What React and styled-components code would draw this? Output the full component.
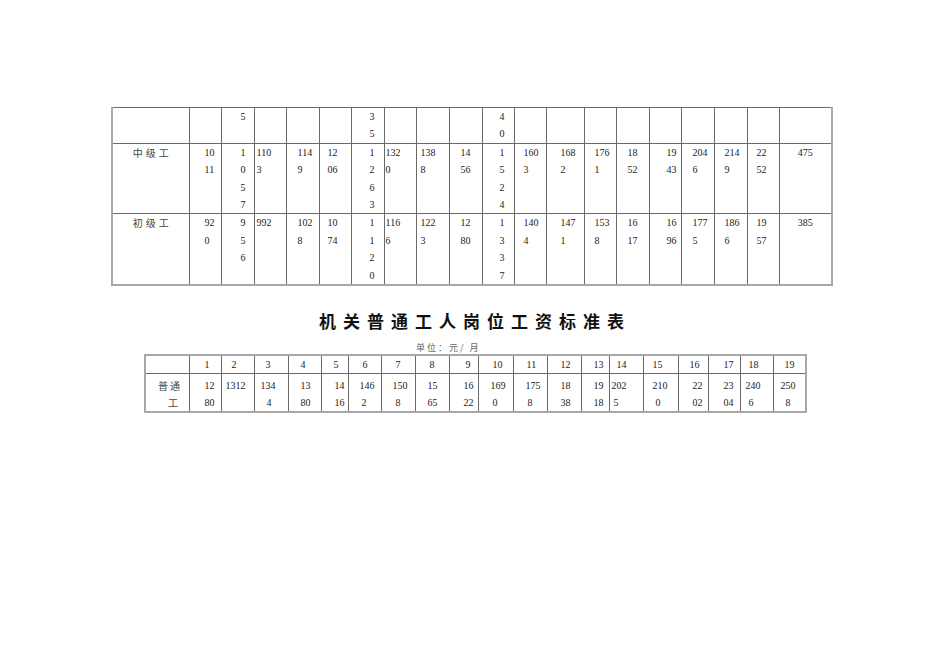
import React from 'react'
import styled, { createGlobalStyle } from 'styled-components'

const GlobalStyle = createGlobalStyle`
    html, body {
        margin: 0;
        padding: 0;
        background-color: #ffffff;
    }
    body {
        font-family: "Liberation Serif", "Noto Sans CJK SC", serif;
        color: #222222;
    }
`

const Page = styled.div`
    width: 950px;
    min-height: 672px;
    padding-top: 107px;
    box-sizing: border-box;
`

const Grid = styled.table`
    border-collapse: collapse;
    table-layout: fixed;
    width: ${props => props.$width}px;
    margin-left: ${props => props.$left}px;
    font-size: 10px;
    line-height: ${props => props.$lineHeight}px;
    border: 2px solid #a8a8a8;
    ${props => props.$openTop ? 'border-top: 1px solid #6a6a6a;' : ''}
`

const Cell = styled.td`
    border: 1px solid #6a6a6a;
    padding: ${props => props.$top || 0}px 0 0 ${props => props.$pad || 0}px;
    vertical-align: top;
    text-align: ${props => props.$center ? 'center' : 'left'};
    white-space: nowrap;
    overflow: hidden;
`

const Line = styled.div`
    padding-left: ${props => props.$dx || 0}px;
`

const Label = styled.div`
    font-family: "Noto Sans CJK SC", sans-serif;
    font-size: 10px;
    letter-spacing: ${props => props.$spacing}px;
    color: #444444;
`

const Title = styled.h1`
    margin: 25px 0 0 0;
    font-family: "Noto Sans CJK SC", sans-serif;
    font-size: 17px;
    font-weight: 700;
    line-height: 20px;
    letter-spacing: 7px;
    text-align: center;
    color: #111111;
`

const Unit = styled.p`
    margin: 11px 0 0 0;
    padding-left: 416px;
    font-family: "Noto Sans CJK SC", sans-serif;
    font-size: 9px;
    line-height: 12px;
    color: #666666;
    letter-spacing: 2px;
`

// upper table: continuation of the wage grid (columns 1..19 plus allowance)
const topWidths = [77, 32, 33, 32, 33, 32, 33, 32, 33, 33, 32, 32, 38, 32, 33, 32, 33, 33, 32, 53]
const topPads = [0, 15, 19, 2, 11, 8, 18, 1, 4, 11, 17, 9, 14, 10, 11, 17, 11, 10, 9, 0]

const topRows = [
    {
        label: '',
        cells: [[], ['5'], [], [], [], ['3', '5'], [], [], [], ['4', '0'],
            [], [], [], [], [], [], [], [], []],
    },
    {
        label: '中级工',
        cells: [['10', '11'], ['1', '0', '5', '7'], ['110', '3'], ['114', '9'], ['12', '06'],
            ['1', '2', '6', '3'], ['132', '0'], ['138', '8'], ['14', '56'], ['1', '5', '2', '4'],
            ['160', '3'], ['168', '2'], ['176', '1'], ['18', '52'], ['19', '43'],
            ['204', '6'], ['214', '9'], ['22', '52'], ['475']],
    },
    {
        label: '初级工',
        cells: [['92', '0'], ['9', '5', '6'], ['992'], ['102', '8'], ['10', '74'],
            ['1', '1', '2', '0'], ['116', '6'], ['122', '3'], ['12', '80'], ['1', '3', '3', '7'],
            ['140', '4'], ['147', '1'], ['153', '8'], ['16', '17'], ['16', '96'],
            ['177', '5'], ['186', '6'], ['19', '57'], ['385']],
    },
]

// lower table: 机关普通工人
const lowWidths = [44, 32, 33, 34, 33, 27, 33, 34, 34, 29, 35, 34, 34, 28, 34, 35, 30, 32, 33, 33]
const headPads = [0, 15, 10, 11, 12, 12, 14, 14, 14, 16, 14, 13, 13, 12, 7, 9, 11, 15, 8, 11]

// [padding, lines, shift of the second line]
const lowCells = [
    [15, ['12', '80'], 0], [4, ['1312'], 0], [6, ['134', '4'], 6], [12, ['13', '80'], 0],
    [13, ['14', '16'], 0], [11, ['146', '2'], 2], [11, ['150', '8'], 3], [12, ['15', '65'], 0],
    [14, ['16', '22'], 0], [12, ['169', '0'], 2], [12, ['175', '8'], 2], [13, ['18', '38'], 0],
    [12, ['19', '18'], 0], [2, ['202', '5'], 2], [9, ['210', '0'], 3], [14, ['22', '02'], 0],
    [15, ['23', '04'], 0], [5, ['240', '6'], 3], [7, ['250', '8'], 5],
]

function UpperTable() {
    return (
        <Grid $width={720} $left={111} $lineHeight={17.4} $openTop>
            <colgroup>
                {topWidths.map((w, i) => <col key={i} style={{ width: w }} />)}
            </colgroup>
            <tbody>
                {topRows.map((row, r) =>
                    <tr key={r}>
                        <Cell $center $pad={3}>
                            <Label $spacing={3}>{row.label}</Label>
                        </Cell>
                        {row.cells.map((lines, c) =>
                            <Cell key={c} $pad={topPads[c + 1]} $center={c === 18}>
                                {lines.map((t, k) => <Line key={k}>{t}</Line>)}
                            </Cell>
                        )}
                    </tr>
                )}
            </tbody>
        </Grid>
    )
}

function LowerTable() {
    return (
        <Grid $width={661} $left={144} $lineHeight={17}>
            <colgroup>
                {lowWidths.map((w, i) => <col key={i} style={{ width: w }} />)}
            </colgroup>
            <tbody>
                <tr>
                    <Cell />
                    {headPads.slice(1).map((p, i) =>
                        <Cell key={i} $pad={p}>{i + 1}</Cell>
                    )}
                </tr>
                <tr>
                    <Cell $pad={12} $top={3}>
                        <Label $spacing={2}>普通</Label>
                        <Label $spacing={2}><Line $dx={10}>工</Line></Label>
                    </Cell>
                    {lowCells.map(([pad, lines, dx], i) =>
                        <Cell key={i} $pad={pad} $top={3}>
                            {lines.map((t, k) => <Line key={k} $dx={k ? dx : 0}>{t}</Line>)}
                        </Cell>
                    )}
                </tr>
            </tbody>
        </Grid>
    )
}

export default function App() {
    return (
        <Page>
            <GlobalStyle />
            <UpperTable />
            <Title>机关普通工人岗位工资标准表</Title>
            <Unit>单位：元/ 月</Unit>
            <LowerTable />
        </Page>
    )
}
